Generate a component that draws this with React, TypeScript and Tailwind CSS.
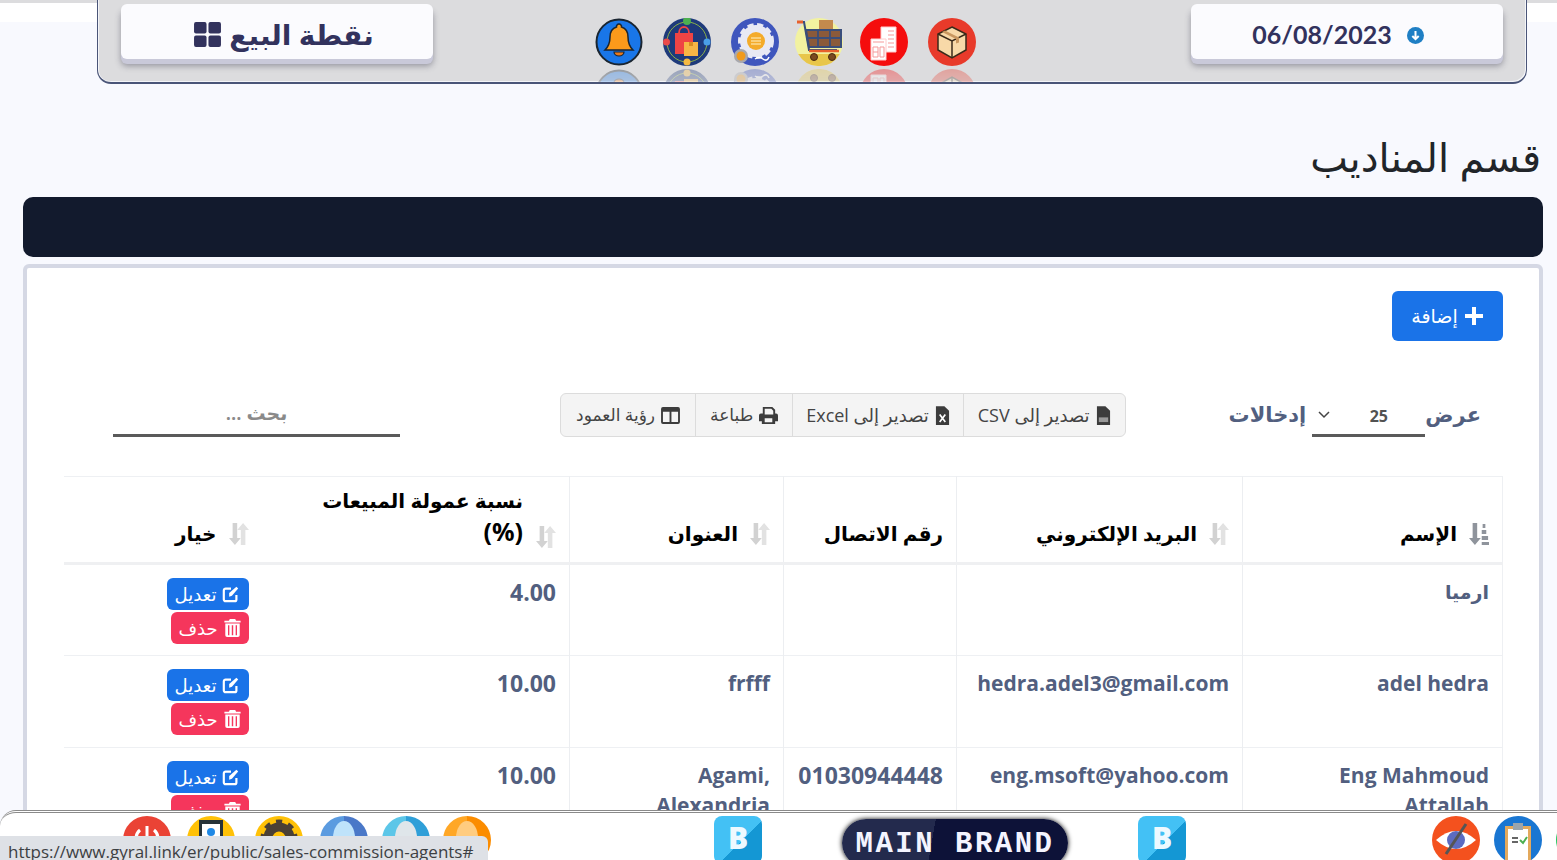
import React from "react";

const ar = "font-['Noto_Sans','DejaVu_Sans',sans-serif]";

function Up({ children }: { children: React.ReactNode }) {
  return <svg viewBox="0 0 48 48" className="w-12 h-12 block">{children}</svg>;
}

function HeaderIcon({ children, className = "" }: { children: React.ReactNode; className?: string }) {
  return (
    <div className={`w-12 h-[64px] overflow-hidden shrink-0 ${className}`}>
      <Up>{children}</Up>
      <div className="mt-[3px] opacity-35 -scale-y-100 [mask-image:linear-gradient(to_top,black,transparent)]">
        <Up>{children}</Up>
      </div>
    </div>
  );
}

const BellI = () => (
  <>
    <circle cx="24" cy="24" r="22.5" fill="#1976e8" stroke="#1a2530" strokeWidth="2" />
    <path d="M24 6a2.5 2.5 0 0 1 2.5 3c5 1.5 6.5 6 6.5 10 0 7 2 10 5 13H10c3-3 5-6 5-13 0-4 1.500-8.500 6.500-10A2.500 2.500 0 0 1 24 6z" fill="#fb9a1b" stroke="#1a2530" strokeWidth="1.500" />
    <path d="M19 34a5 4 0 0 0 10 0z" fill="#e8781a" stroke="#1a2530" strokeWidth="1.200" />
  </>
);
const BagI = () => (
  <>
    <circle cx="24" cy="24" r="24" fill="#1e3a7b" />
    <circle cx="24" cy="24" r="20" fill="none" stroke="#8ab04a" strokeWidth="1" />
    <circle cx="24" cy="3" r="4" fill="#4caf50" />
    <circle cx="3.500" cy="24" r="3.500" fill="#e94a4a" />
    <circle cx="44" cy="24" r="3.500" fill="#4a9fe8" />
    <circle cx="24" cy="44" r="3.500" fill="#f5b942" />
    <path d="M12 15h18v21H12z" fill="#ef4444" />
    <path d="M16 15c0-8 10-8 10 0" fill="none" stroke="#ef4444" strokeWidth="1.800" />
    <path d="M21 24h14v14H21z" fill="#f7b645" />
    <path d="M26 24h4v4h-4z" fill="#d98c22" />
  </>
);
const GearI = () => (
  <>
    <circle cx="24" cy="24" r="24" fill="#3f56bd" />
    <circle cx="25" cy="23" r="16" fill="#e8e9f4" strokeDasharray="6 3.500" stroke="#e8e9f4" strokeWidth="4" />
    <circle cx="25" cy="23" r="9" fill="#f4ab2a" />
    <path d="M20 20h10M20 23h10M20 26h10" stroke="#fff3c9" strokeWidth="1" />
    <circle cx="10" cy="38" r="7" fill="#a8a8ad" />
    <circle cx="10" cy="38" r="4.500" fill="#f19a1c" />
    <path d="M24 41q4-3 8 0t6-2" fill="none" stroke="#fff" strokeWidth="1.500" />
  </>
);
const CartI = () => (
  <>
    <circle cx="24" cy="24" r="24" fill="#f2f2a0" />
    <path d="M3.200 36H44.800A24 24 0 0 1 3.200 36z" fill="#e8c64a" />
    <path d="M24 2h14v10H24z" fill="#c48a4d" />
    <path d="M2 4h7l5 28h28" fill="none" stroke="#3a4e7a" strokeWidth="2" />
    <path d="M2 4h6" fill="none" stroke="#e8602c" strokeWidth="3" />
    <path d="M11 12h35v17H14z" fill="#8b5a3a" stroke="#3a4e7a" strokeWidth="2" />
    <path d="M12 20h34M23 12v17M35 12v17" stroke="#3a4e7a" strokeWidth="1.800" />
    <path d="M14 33h30" stroke="#e8602c" strokeWidth="2.500" />
    <circle cx="19" cy="39" r="3.500" fill="#7a4a20" stroke="#4a2a10" />
    <circle cx="37" cy="39" r="3.500" fill="#7a4a20" stroke="#4a2a10" />
  </>
);
const DocI = () => (
  <>
    <circle cx="24" cy="24" r="24" fill="#f50d0d" />
    <path d="M21 9h15v25H21z" fill="#fff" stroke="#fcc" />
    <path d="M28 13h6M28 17h6M28 21h6M28 25h6M28 29h6" stroke="#f59999" strokeWidth="1" />
    <path d="M11 21h15v21H11z" fill="#fff" stroke="#fcc" />
    <path d="M13 24h11M13 29h5v10h-5zM20 29h4v10h-4zM13 34h5" fill="none" stroke="#f59999" strokeWidth="1" />
  </>
);
const BoxI = () => (
  <>
    <circle cx="24" cy="24" r="24" fill="#e83a2a" />
    <path d="M24 9l14 7v16l-14 8-14-8V16z" fill="#f8d9a8" stroke="#3a2a1a" strokeWidth="1.500" />
    <path d="M10 16l14 7 14-7M24 23v17" fill="none" stroke="#3a2a1a" strokeWidth="1.500" />
    <path d="M17 12.500l14 7v5l-3 1v-4.500l-14-7z" fill="#c9975f" />
  </>
);

function FooterCircle({ className = "", children }: { className?: string; children?: React.ReactNode }) {
  return (
    <div className={`w-12 h-12 rounded-full shrink-0 overflow-hidden ${className}`}>
      <svg viewBox="0 0 48 48" className="w-12 h-12 block">{children}</svg>
    </div>
  );
}

const Half = ({ a, b, c }: { a: string; b: string; c: string }) => (
  <>
    <rect width="24" height="48" fill={a} />
    <rect x="24" width="24" height="48" fill={b} />
    <ellipse cx="24" cy="22" rx="11" ry="17" fill={c} />
  </>
);

function BTile() {
  return (
    <div className="w-12 h-12 rounded-lg bg-[linear-gradient(135deg,#43c1f5_55%,#1497d4_55%)] flex justify-center pt-1 shrink-0 font-['Open_Sans',sans-serif] font-extrabold text-[30px] leading-9 text-[#eef9ff] overflow-hidden">
      B
    </div>
  );
}

const SortI = () => (
  <svg viewBox="0 0 22 24" className="w-5 h-6 shrink-0" preserveAspectRatio="none">
    <path d="M4 1h5v15h4l-6.500 7L0 16h4z" fill="#d2d2d2" />
    <path d="M15.500 1L22 8h-4v15h-5V8H9z" fill="#e2e2e2" />
  </svg>
);

const NameSortI = () => (
  <svg viewBox="0 0 22 24" className="w-5 h-6 shrink-0" fill="#8f949c" preserveAspectRatio="none">
    <path d="M4 1h5v15h4l-6.500 7L0 16h4z" />
    <path d="M15 2h3v4h-3zM14 8h5v4h-5zM14 14h7v4h-7zM14 20h8v3h-8z" />
  </svg>
);

const EditI = () => (
  <svg viewBox="0 0 20 20" className="w-[18px] h-[18px]" fill="none" stroke="#fff" strokeWidth="2.400">
    <path d="M16 11v5a2 2 0 0 1-2 2H4a2 2 0 0 1-2-2V6a2 2 0 0 1 2-2h6" />
    <path d="M8 9l8-7 2 2-7 8-3 1z" fill="#fff" stroke="none" />
  </svg>
);
const TrashI = () => (
  <svg viewBox="0 0 18 20" className="w-[17px] h-[18px]" fill="#fff">
    <path d="M6 0h6l1 2h5v2H0V2h5zM1 5h16v13a2 2 0 0 1-2 2H3a2 2 0 0 1-2-2zM4 7v11h1.500V7zM8.200 7v11h1.600V7zM12.500 7v11H14V7z" fillRule="evenodd" />
  </svg>
);

function Actions() {
  return (
    <div className="flex flex-col items-start gap-[2px]">
      <button className={`w-[82px] h-8 rounded-[6px] bg-[#1a73e8] text-white text-[18px] flex items-center justify-center gap-[6px] ${ar}`}>
        <EditI />
        <span>تعديل</span>
      </button>
      <button className={`w-[78px] h-8 rounded-[6px] bg-[#f5365c] text-white text-[18px] flex items-center justify-center gap-[6px] ${ar}`}>
        <TrashI />
        <span>حذف</span>
      </button>
    </div>
  );
}

const headers = [
  { t: "الإسم", w: "w-[260px]", icon: <NameSortI /> },
  { t: "البريد الإلكتروني", w: "w-[286px]", icon: <SortI /> },
  { t: "رقم الاتصال", w: "w-[173px]", icon: null },
  { t: "العنوان", w: "w-[214px]", icon: <SortI /> },
];

const rows = [
  { n: "ارميا", e: "", p: "", a: "", c: "4.00", size: "text-[19px]" },
  { n: "adel hedra", e: "hedra.adel3@gmail.com", p: "", a: "frfff", c: "10.00", size: "text-[21px]" },
  { n: "Eng Mahmoud Attallah", e: "eng.msoft@yahoo.com", p: "01030944448", a: "Agami, Alexandria", c: "10.00", size: "text-[21px]" },
];

const cell = "px-[13px] pt-[12px] border-l border-[#eceef1] leading-[30px] font-bold text-[#525f7f] font-['Open_Sans','DejaVu_Sans',sans-serif] align-top";
const th = `align-bottom pb-[13px] px-[13px] text-right font-bold text-black text-[20px] leading-[30px] ${ar}`;

export default function App() {
  return (
    <div dir="rtl" className="w-full h-[860px] overflow-hidden relative bg-[#f8f9fe]">
      {/* top strip */}
      <div className="h-[22px] bg-white border-t-[3px] border-[#dcdcde]" />

      {/* header bar */}
      <div className="ml-[97px] mr-[30px] -mt-[22px] h-[84px] bg-[#dcdcde] rounded-b-[14px] border-x border-b-2 border-[#4a5578] [box-shadow:inset_-1px_-1px_0_#f4f5f8,inset_1px_0_0_#f4f5f8] flex items-start justify-between pt-[4px] px-[23px]">
        <div dir="ltr" className="w-[312px] h-[55px] pt-[7px] pr-[18px] bg-[#fbfbfe] rounded-[6px] [box-shadow:0_5px_0_#c9c9d9,0_7px_6px_rgba(60,60,80,.45)] flex items-center justify-center gap-[15px] text-[#32325d] font-['Lato',sans-serif] font-bold text-[25px]">
          <span>06/08/2023</span>
          <span className="w-[17px] h-[17px] rounded-full bg-[#1f7fc4] flex items-center justify-center">
            <svg viewBox="0 0 12 12" className="w-[11px] h-[11px]" fill="none" stroke="#fff" strokeWidth="2.200"><path d="M6 1v9M2.500 6.500L6 10l3.500-3.500" /></svg>
          </span>
        </div>

        <div dir="ltr" className="flex items-start pt-[14px] mr-[53px]">
          <HeaderIcon><BellI /></HeaderIcon>
          <HeaderIcon className="ml-5"><BagI /></HeaderIcon>
          <HeaderIcon className="ml-5"><GearI /></HeaderIcon>
          <HeaderIcon className="ml-4"><CartI /></HeaderIcon>
          <HeaderIcon className="ml-[17px]"><DocI /></HeaderIcon>
          <HeaderIcon className="ml-5"><BoxI /></HeaderIcon>
        </div>

        <div className="w-[312px] h-[55px] pt-[5px] pl-[14px] bg-[#fbfbfe] rounded-[6px] [box-shadow:0_5px_0_#c9c9d9,0_7px_6px_rgba(60,60,80,.45)] flex items-center justify-center gap-[8px] text-[#32325d]">
          <span className={`${ar} text-[28px] font-bold`}>نقطة البيع</span>
          <svg viewBox="0 0 28 26" className="w-[27px] h-[25px]" fill="#32325d">
            <rect x="0" y="0" width="13" height="12" rx="2" /><rect x="15" y="0" width="13" height="12" rx="2" />
            <rect x="0" y="14" width="13" height="12" rx="2" /><rect x="15" y="14" width="13" height="12" rx="2" />
          </svg>
        </div>
      </div>

      {/* title */}
      <h1 className={`mt-[50px] mr-[16px] text-[40px] leading-[46px] text-[#212529] ${ar}`}>قسم المناديب</h1>

      {/* dark bar */}
      <div className="mt-[17px] mr-[14px] ml-[23px] h-[60px] rounded-[10px] bg-[#121a2d]" />

      {/* card */}
      <div className="mt-[7px] mr-[14px] ml-[23px] h-[600px] bg-white border-4 border-[#d5d8e4] rounded-[6px] pt-[23px] px-[36px]">
        <button className={`flex items-center gap-[6px] h-[50px] w-[111px] justify-center rounded-[6px] bg-[#1a73e8] text-white text-[19px] ${ar}`}>
          <svg viewBox="0 0 20 20" className="w-5 h-5" fill="#fff"><path d="M8 1h4v7h7v4h-7v7H8v-7H1V8h7z" /></svg>
          <span>إضافة</span>
        </button>

        {/* controls */}
        <div className="mt-[51px] h-[46px] flex items-center">
          <div className={`flex items-center mr-[22px] text-[#525f7f] text-[21px] font-semibold ${ar}`}>
            <span>عرض</span>
            <div dir="ltr" className="relative w-[113px] h-[44px] ml-[6px] border-b-[3px] border-[#5a5a5a] flex items-center justify-center text-[16px] font-bold text-[#525252]">
              <svg viewBox="0 0 14 14" className="absolute left-[5px] w-[14px] h-[14px]" fill="none" stroke="#444" strokeWidth="1.500"><path d="M2 5l5 5 5-5" /></svg>
              <span className="font-['Open_Sans',sans-serif] ml-5 pt-1">25</span>
            </div>
            <span>إدخالات</span>
          </div>

          <div className={`mr-[103px] flex h-[44px] rounded-[6px] border border-[#dcdcdc] bg-[#f4f4f4] text-[#444] text-[17px] ${ar}`}>
            <div className="px-[14px] flex items-center gap-[6px]">
              <svg viewBox="0 0 16 20" className="w-[15px] h-[19px]" fill="#3c3c3c"><path d="M1 0h9l5 5v15H1z" /><path d="M3 12h10v5H3z" fill="#999" /></svg>
              <span className="font-['Open_Sans','DejaVu_Sans',sans-serif] text-[18px]">تصدير إلى CSV</span>
            </div>
            <div className="px-[13px] flex items-center gap-[6px] border-r border-[#dcdcdc]">
              <svg viewBox="0 0 16 20" className="w-[15px] h-[19px]" fill="#3c3c3c"><path d="M1 0h9l5 5v15H1z" /><path d="M5 9l6 8M11 9l-6 8" stroke="#fff" strokeWidth="1.800" /></svg>
              <span className="font-['Open_Sans','DejaVu_Sans',sans-serif] text-[18px]">تصدير إلى Excel</span>
            </div>
            <div className="px-[14px] flex items-center gap-[6px] border-r border-[#dcdcdc]">
              <svg viewBox="0 0 20 20" className="w-[19px] h-[19px]" fill="#3c3c3c"><path d="M4 1h10l3 3v4h1a2 2 0 0 1 2 2v6h-3v3H3v-3H0v-6a2 2 0 0 1 2-2h2zM6 3v6h9V5l-2-2zM6 13v4h8v-4z" fillRule="evenodd" /></svg>
              <span>طباعة</span>
            </div>
            <div className="px-[15px] flex items-center gap-[6px] border-r border-[#dcdcdc]">
              <svg viewBox="0 0 20 18" className="w-[19px] h-[17px]" fill="#3c3c3c"><path d="M2 0h16a2 2 0 0 1 2 2v14a2 2 0 0 1-2 2H2a2 2 0 0 1-2-2V2a2 2 0 0 1 2-2zm0 5v11h7V5zm9 0v11h7V5z" fillRule="evenodd" /></svg>
              <span>رؤية العمود</span>
            </div>
          </div>

          <div className={`mr-[160px] w-[287px] h-[44px] border-b-[3px] border-[#5a5a5a] flex items-center justify-center text-[#8a8a8a] text-[19px] font-semibold ${ar}`}>
            بحث ...
          </div>
        </div>

        {/* table */}
        <table className="mt-[38px] w-[1439px] border-t border-r border-[#eef0f3] table-fixed border-collapse">
          <thead>
            <tr className="h-[87px] border-b-[3px] border-[#eff0f2]">
              {headers.map((h) => (
                <th key={h.t} className={`${h.w} border-l border-[#eceef1] ${th}`}>
                  <div className="flex items-center gap-[12px]">
                    {h.icon}
                    <span>{h.t}</span>
                  </div>
                </th>
              ))}
              <th className={`w-[308px] ${th}`}>
                <div className="flex items-end gap-[13px]">
                  <SortI />
                  <span>نسبة عمولة المبيعات<br /><span className="text-[25px]">(%)</span></span>
                </div>
              </th>
              <th className={th}>
                <div className="flex items-center gap-[12px]">
                  <SortI />
                  <span>خيار</span>
                </div>
              </th>
            </tr>
          </thead>
          <tbody>
            {rows.map((r) => (
              <tr key={r.n} className="h-[92px] border-b border-[#eef0f3] align-top">
                <td className={`${cell} ${r.size}`}>{r.n}</td>
                <td className={`${cell} text-[21px]`}>{r.e}</td>
                <td className={`${cell} text-[23px]`}>{r.p}</td>
                <td className={`${cell} text-[21px]`}>{r.a}</td>
                <td className={`${cell} text-[23px] border-l-0`}>{r.c}</td>
                <td className="px-[13px] pt-[13px] align-top"><Actions /></td>
              </tr>
            ))}
          </tbody>
        </table>
      </div>

      {/* bottom fixed bar */}
      <div dir="ltr" className="absolute left-0 right-0 bottom-0 h-[50px] bg-white border-t-[3px] border-double border-[#8a8a8a] rounded-tl-[16px] flex items-start pt-[3px] overflow-hidden">
        <div className="flex ml-[123px]">
          <FooterCircle>
            <rect width="48" height="48" fill="#ea4335" />
            <path d="M24 10v12" stroke="#fff" strokeWidth="3" />
            <path d="M17 14a11 11 0 1 0 14 0" fill="none" stroke="#fff" strokeWidth="3" />
          </FooterCircle>
          <FooterCircle className="ml-4">
            <rect width="48" height="48" fill="#ffc107" />
            <path d="M12 4h24v44H12z" fill="#263238" />
            <path d="M15 8h18v32H15z" fill="#fff" />
            <circle cx="24" cy="16" r="4" fill="#1e88e5" />
            <path d="M18 28q6-12 12 0z" fill="#1e88e5" />
          </FooterCircle>
          <FooterCircle className="ml-5">
            <rect width="48" height="48" fill="#ffc107" />
            <circle cx="24" cy="22" r="11" fill="none" stroke="#4a4035" strokeWidth="9" />
            <circle cx="24" cy="22" r="16" fill="none" stroke="#4a4035" strokeWidth="5" strokeDasharray="6 6" />
          </FooterCircle>
          <FooterCircle className="ml-[17px]"><Half a="#5b9be0" b="#4a78c8" c="#bfe3fb" /></FooterCircle>
          <FooterCircle className="ml-[14px]"><Half a="#5cc6e8" b="#2f9fd8" c="#dfe6ea" /></FooterCircle>
          <FooterCircle className="ml-[13px]"><Half a="#ffa726" b="#fb8c00" c="#ffcc80" /></FooterCircle>
        </div>
        <div className="ml-[223px]"><BTile /></div>
        <div className="ml-[80px] w-[226px] h-[48px] mt-[3px] pt-1 rounded-[24px] bg-[linear-gradient(100deg,#232a4d_40%,#0d1238_40%)] [box-shadow:0_0_5px_#000] flex items-center justify-center text-[#f4f4ff] font-['Liberation_Mono',monospace] font-bold text-[29px] tracking-[2.500px]">MAIN BRAND</div>
        <div className="ml-[70px]"><BTile /></div>
        <div className="ml-auto flex gap-[14px] -mr-[47px]">
          <FooterCircle>
            <rect width="48" height="48" fill="#f4511e" />
            <path d="M4 24q20-18 40 0-20 18-40 0z" fill="#fff" />
            <circle cx="24" cy="24" r="9" fill="#5c6bc0" />
            <path d="M34 8L14 38" stroke="#555" strokeWidth="3" />
          </FooterCircle>
          <FooterCircle>
            <rect width="48" height="48" fill="#1976d2" />
            <path d="M11 10h26v38H11z" fill="#e3a95c" />
            <path d="M14 13h20v35H14z" fill="#fff" />
            <path d="M19 7h10v7H19z" fill="#9aa5ad" />
            <path d="M18 22h6M18 26h6" stroke="#666" strokeWidth="2" />
            <path d="M26 24l3 3 4-6" stroke="#4caf50" strokeWidth="2" fill="none" />
          </FooterCircle>
          <FooterCircle><rect width="48" height="48" fill="#22c55e" /></FooterCircle>
        </div>
      </div>

      {/* status tooltip */}
      <div dir="ltr" className="absolute left-0 bottom-0 h-6 w-[488px] bg-[#dee1e6] rounded-tr-[6px] pl-2 text-[17px] leading-[32px] text-[#3c4043] font-['Open_Sans',sans-serif] whitespace-nowrap overflow-hidden">
        https://www.gyral.link/er/public/sales-commission-agents#
      </div>
    </div>
  );
}
